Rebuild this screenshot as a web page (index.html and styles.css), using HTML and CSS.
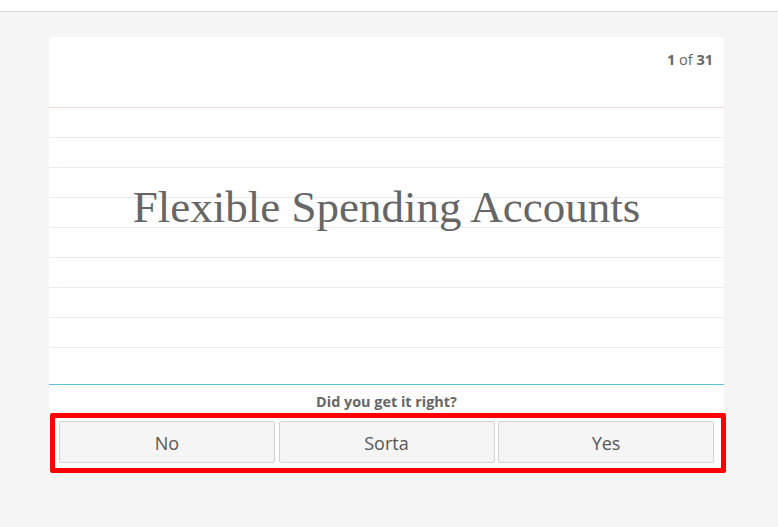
FILE: index.html
```html
<!DOCTYPE html>
<html>
<head>
<meta charset="utf-8">
<link rel="stylesheet" href="styles.css">
</head>
<body>
<div class="topbar"></div>
<main class="page">
  <section class="card">
    <header class="card-head"><span class="count"><b>1</b> of <b>31</b></span></header>
    <div class="lined">
      <h1 class="title">Flexible Spending Accounts</h1>
    </div>
    <div class="prompt">Did you get it right?</div>
    <div class="answers">
      <button class="btn">No</button>
      <button class="btn">Sorta</button>
      <button class="btn">Yes</button>
    </div>
  </section>
</main>
</body>
</html>
```
FILE: styles.css
```css
html, body {
  margin: 0;
  padding: 0;
  background: #f5f5f5;
  font-family: "Open Sans", sans-serif;
  height: 100%;
}
.topbar {
  height: 11px;
  background: #ffffff;
  border-bottom: 1px solid #d6d6d6;
}
.page {
  padding: 25px 0 0 49px;
}
.card {
  width: 675px;
  background: #ffffff;
  border-radius: 3px;
}
.card-head {
  height: 71px;
  border-bottom: 1px solid #f0dcdc;
  display: flex;
  justify-content: flex-end;
  align-items: flex-start;
  padding: 13px 11px 0 0;
  box-sizing: border-box;
}
.count {
  font-size: 14.5px;
  line-height: 20px;
  color: #666;
}
.count b {
  font-weight: 700;
}
.lined {
  height: 269px;
  margin-bottom: 7px;
  background: repeating-linear-gradient(to bottom, transparent 0, transparent 29px, #e9edf1 29px, #e9edf1 30px);
  padding-top: 73px;
  box-sizing: border-box;
}
.title {
  margin: 0;
  font-family: "Liberation Serif", "Times New Roman", serif;
  font-weight: 400;
  font-size: 45px;
  line-height: 52px;
  color: #666;
  text-align: center;
}
.prompt {
  border-top: 1px solid #5bc0de;
  padding-top: 8px;
  height: 20px;
  font-size: 14.4px;
  line-height: 18px;
  font-weight: 700;
  color: #666;
  text-align: center;
}
.answers {
  margin: 0 -2px 0 1px;
  border: 5px solid #ff0000;
  border-radius: 2px;
  padding: 3px 7px 5px 4px;
  display: grid;
  grid-template-columns: 216px 216px 216px;
  column-gap: 3.5px;
  background: #fff;
}
.btn {
  height: 42px;
  margin: 0;
  background: #f5f5f5;
  border: 1px solid #d2d2d2;
  border-radius: 2px;
  font-family: "Open Sans", sans-serif;
  font-size: 18px;
  color: #555;
  padding: 2px 0 0 0;
}
```
